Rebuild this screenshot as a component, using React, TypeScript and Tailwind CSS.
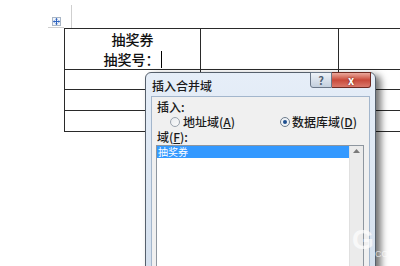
export default function App() {
  const font = { fontFamily: '"Noto Sans CJK SC", "Noto Sans", sans-serif' };
  const cell = "border-r border-b border-[#2a2a2a]";
  return (
    <div className="relative w-[400px] h-[266px] overflow-hidden bg-white" style={font}>
      {/* margin marks */}
      <div className="absolute left-[71px] top-[5px] h-[23px] w-px bg-[#cfcfcf]" />
      <div className="absolute left-[48px] top-[27px] h-px w-[16px] bg-[#cfcfcf]" />
      {/* table move handle */}
      <div className="absolute left-[52px] top-[17px] w-[9px] h-[9px] border border-[#a9b6c6] bg-[#f3f6fa] flex items-center justify-center">
        <svg width="7" height="7" viewBox="0 0 7 7">
          <path d="M3.5 0.5 V6.5 M0.5 3.5 H6.5" stroke="#2f64c0" strokeWidth="1" fill="none" />
          <path d="M3.5 0 L2 1.5 H5 Z M3.5 7 L2 5.5 H5 Z M0 3.5 L1.5 2 V5 Z M7 3.5 L5.5 2 V5 Z" fill="#2f64c0" />
        </svg>
      </div>

      {/* table */}
      <div className="pl-[64px] pt-[28px]">
        <div className="w-[430px] border-l border-t border-[#2a2a2a] grid grid-cols-[136px_138px_156px] grid-rows-[41px_20px_21px_21px]">
          <div className={`${cell} flex flex-col items-center justify-center text-[14px] leading-[20px] font-medium text-[#111]`}>
            <div>抽奖券</div>
            <div className="flex items-center">
              <span>抽奖号：</span>
              <span className="ml-[1px] inline-block w-px h-[17px] bg-black" />
            </div>
          </div>
          <div className={cell} />
          <div className={cell} />
          <div className={cell} />
          <div className={cell} />
          <div className={cell} />
          <div className={cell} />
          <div className={cell} />
          <div className={cell} />
          <div className={cell} />
          <div className={cell} />
          <div className={cell} />
        </div>
      </div>

      {/* dialog */}
      <div className="absolute left-[145px] top-[72px] w-[231px] h-[220px] rounded-t-[6px] border border-[#56606c] bg-gradient-to-b from-[#e6eef8] to-[#d2deec] shadow-[5px_3px_7px_rgba(0,0,0,0.55)] flex flex-col px-[5px]">
        <div className="h-[23px] flex items-start justify-between shrink-0">
          <div className="mt-[6px] ml-[1px] text-[12px] leading-[14px] font-medium text-[#1b1b1b]">插入合并域</div>
          <div className="flex mr-[-1px] mt-[-1px]">
            <div className="w-[22px] h-[16px] border border-[#6b7889] rounded-bl-[3px] bg-gradient-to-b from-[#eef3f9] to-[#c3cfdd] flex items-center justify-center text-[11px] leading-none font-bold text-[#4f5f72]">?</div>
            <div className="w-[39px] h-[16px] border border-l-0 border-[#6e2a22] rounded-br-[3px] bg-gradient-to-b from-[#e9a89c] via-[#c8493a] to-[#d9776a] flex items-center justify-center text-[11px] leading-none font-bold text-white [text-shadow:0_0_2px_#5a1a12]">x</div>
          </div>
        </div>
        <div className="flex-1 border border-[#a3b6cc] bg-[#f0f0f0] pl-[4px] pr-[5px] pt-[3px] text-[12px] leading-[14px] font-medium text-[#1b1b1b]">
          <div className="ml-[1px]">插入:</div>
          <div className="flex items-center h-[14px] mt-[1px]">
            <div className="ml-[14px] w-[110px] flex items-center">
              <span className="w-[10px] h-[10px] rounded-full border border-[#9aa3ad] bg-gradient-to-br from-[#e9ecef] to-[#fafafa]" />
              <span className="ml-[3px]">地址域(<span className="underline">A</span>)</span>
            </div>
            <div className="flex items-center">
              <span className="w-[10px] h-[10px] rounded-full border border-[#6d7c8c] bg-[#eef2f6] flex items-center justify-center">
                <span className="w-[4px] h-[4px] rounded-full bg-[#1d4f8f]" />
              </span>
              <span className="ml-[2px]">数据库域(<span className="underline">D</span>)</span>
            </div>
          </div>
          <div className="ml-[1px] mt-[1px]">域(<span className="underline">F</span>):</div>
          <div className="mt-[1px] w-[208px] h-[140px] border border-[#8e969f] bg-white flex">
            <div className="flex-1">
              <div className="h-[12px] bg-[#3399ff] text-white text-[10px] leading-[12px] font-normal pl-[1px]">抽奖券</div>
            </div>
            <div className="w-[14px] bg-[#ebebeb] border-l border-[#e0e0e0] flex justify-center pt-[3px]">
              <svg width="7" height="4" viewBox="0 0 7 4">
                <path d="M3.5 0 L7 4 H0 Z" fill="#7a7a7a" />
              </svg>
            </div>
          </div>
        </div>
      </div>

      {/* watermark */}
      <div className="absolute left-[352px] top-[226px] text-[28px] leading-none font-bold text-white/70" style={{ fontFamily: '"Liberation Sans", sans-serif' }}>G</div>
      <div className="absolute left-[375px] top-[250px] text-[9px] leading-none text-white/70" style={{ fontFamily: '"Liberation Sans", sans-serif' }}>CO</div>
    </div>
  );
}
